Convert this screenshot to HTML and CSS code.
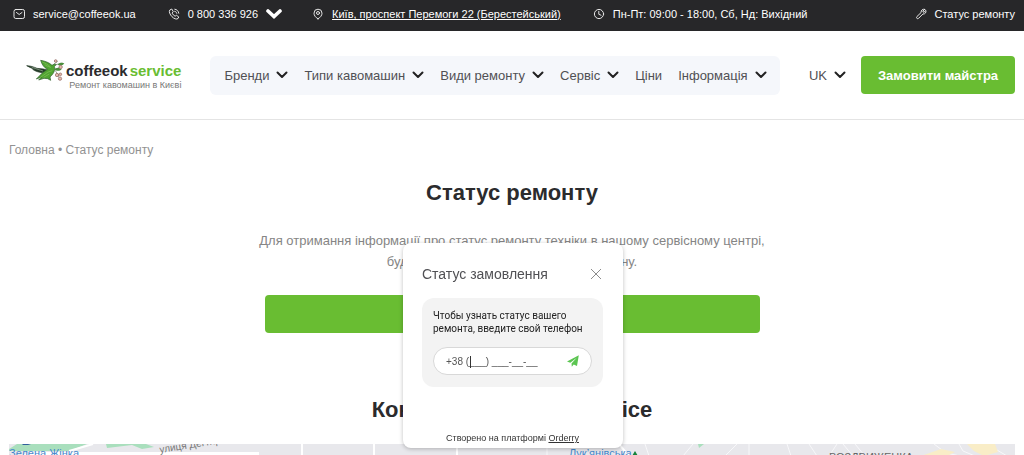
FILE: index.html
```html
<!DOCTYPE html>
<html lang="uk">
<head>
<meta charset="utf-8">
<meta name="viewport" content="width=device-width, initial-scale=1">
<title>Статус ремонту</title>
<link rel="stylesheet" href="styles.css">
</head>
<body>
<svg class="defs" aria-hidden="true">
  <symbol id="chevron" viewBox="0 0 12 8"><path d="M1.5 1.5 6 6l4.500-4.500" fill="none" stroke="currentColor" stroke-width="2" stroke-linecap="round" stroke-linejoin="round"/></symbol>
</svg>

<div class="topbar">
  <a class="top-item mail" href="mailto:service@coffeeok.ua">
    <svg class="top-icon" viewBox="0 0 12 12"><rect x="1" y="1.500" width="10.500" height="9" rx="1.800"/><path d="M3.500 4.500 6.200 6.500 9 4.500"/></svg>
    <span>service@coffeeok.ua</span>
  </a>
  <a class="top-item phone" href="tel:0800336926">
    <svg class="top-icon" viewBox="0 0 12 12"><path d="M3.400 1.200 1.800 2C.6 3.500 2 6.700 4 8.700s4.600 3 6 1.800l.8-1.500-2.300-1.700-1.400.9C5.800 7.600 4.800 6.500 4.200 5.200L5 3.800ZM6.800 1.200c2 .2 3.700 1.800 4 4M6.700 3.300c1 .1 1.900 1 2.100 2"/></svg>
    <span>0 800 336 926</span>
    <svg class="phone-chevron" viewBox="0 0 16 10"><path d="M2 2l6 5.500L14 2" fill="none" stroke="#fff" stroke-width="3.600" stroke-linecap="round"/></svg>
  </a>
  <a class="top-item address" href="#map">
    <svg class="top-icon" viewBox="0 0 12 12"><path d="M6 10.800C3.500 9.400 2 7.400 2 5.200a4 4 0 0 1 8 0c0 2.200-1.500 4.200-4 5.600Z"/><circle cx="6" cy="5" r="1.500"/></svg>
    <span>Київ, проспект Перемоги 22 (Берестейський)</span>
  </a>
  <div class="top-item hours">
    <svg class="top-icon" viewBox="0 0 12 12"><circle cx="6" cy="6" r="4.600"/><path d="M5.800 3.300v3l2.200.9"/></svg>
    <span>Пн-Пт: 09:00 - 18:00, Сб, Нд: Вихідний</span>
  </div>
  <a class="top-item status" href="#status">
    <svg class="top-icon" viewBox="0 0 12 12"><path d="M9.700 1.300 7.900 3.100l.2 1 .9.100 1.900-1.800c.5 2-.8 3.900-3 3.600L3.600 10.300c-1.100 1.100-2.900-.4-1.700-1.700L6.100 4.500C5.800 2.300 7.600.7 9.700 1.300Z"/></svg>
    <span>Статус ремонту</span>
  </a>
</div>

<header class="header">
  <a class="logo" href="#">
    <svg class="bird" viewBox="78 174 120 72">
      <path d="M80 197c10 0 22 4 31 8l20 2 13 4-17 7c-12-1-23-5-29-10l10 1c-10-3-20-7-28-12Z" fill="#253c28" stroke="#253c28" stroke-width="2"/>
      <path d="M95 202 129 213" stroke="#c4d4c0" stroke-width="1.500"/>
      <path d="M122 181c12 2 25 6 34 15l7-4 6 2-6 5c4 10-2 23-13 32l2 10-9-5-11-1-16 5 9-9-16 6 18-18 15-11c-10-6-16-13-20-27Z" fill="#4fa331" stroke="#2c5a29" stroke-width="2"/>
      <path d="M127 186c9 4 18 8 25 16-7-2-14-5-18-9M120 233l24-17 13-4M131 232l17-10" stroke="#73b94c" stroke-width="3" fill="none"/>
      <path d="M162 192c5-4 8-4 11-8M168 194l20-5M163 207c8 0 14-4 19-9M164 210c6 8 10 12 13 22" stroke="#6a7562" stroke-width="2" fill="none"/>
      <path d="M173 194c6-7 12-7 20-4-5 7-12 9-20 4ZM163 208c7-6 16-5 22 0-6 6-15 6-22 0Z" fill="#4a8f3b"/>
      <g fill="#e5b9ab" stroke="#8a625d" stroke-width="2"><circle cx="167" cy="183" r="4"/><circle cx="182" cy="201" r="5"/><circle cx="171" cy="225" r="5"/><circle cx="180" cy="236" r="5"/><circle cx="181" cy="223" r="4"/></g>
    </svg>
    <span class="logo-words"><span class="logo-name">coffeeok<b>service</b></span><span class="logo-sub">Ремонт кавомашин в Києві</span></span>
  </a>
  <nav class="nav">
    <a href="#">Бренди <svg class="chevron"><use href="#chevron"/></svg></a>
    <a href="#">Типи кавомашин <svg class="chevron"><use href="#chevron"/></svg></a>
    <a href="#">Види ремонту <svg class="chevron"><use href="#chevron"/></svg></a>
    <a href="#">Сервіс <svg class="chevron"><use href="#chevron"/></svg></a>
    <a href="#">Ціни</a>
    <a href="#">Інформація <svg class="chevron"><use href="#chevron"/></svg></a>
  </nav>
  <button class="lang" type="button">UK <svg class="chevron"><use href="#chevron"/></svg></button>
  <button class="order" type="button">Замовити майстра</button>
</header>

<main class="main">
  <div class="crumbs"><a href="#">Головна</a> • <span>Статус ремонту</span></div>
  <section class="intro" id="status">
    <h1>Статус ремонту</h1>
    <p>Для отримання інформації про статус ремонту техніки в нашому сервісному центрі, будь ласка, введіть свій номер телефону.</p>
    <button class="check" type="button" aria-label="Перевірити статус"></button>
  </section>
  <h2>Контакти Coffeeok service</h2>
  <div class="map" id="map">
    <svg class="map-art" viewBox="0 0 1006 12" preserveAspectRatio="xMinYMin slice">
      <rect width="1006" height="12" fill="#e8e8ec"/>
      <path d="M8 0h70l-18 7H0V5ZM97 0h40l8 3-12 2-10-4-25 3ZM689 0h6l-5 4Z" fill="#a9dfbd"/>
      <path d="M14 0h8l-3 1h-6Z" fill="#315f9b"/>
      <path d="M60 7 84 0M293 0v12M365 0v12M448 0v12M610 0l10 12" fill="none" stroke="#fff" stroke-width="2"/>
      <path d="M538 0v12M636 0l4 12M674 12l10-12M716 12 728 0M740 0v12M778 0l4 12M800 0l8 12M820 12 828 0M834 0l10 12M846 0l10 12M925 0l12 9 14 3M950 0l4 7 12 5M978 0l20 12" fill="none" stroke="#f8f8fa" stroke-width="1"/>
      <path d="M22 8h228v4H8Z" fill="#fff"/>
      <path d="M912 12l20-7 14 3-8 4ZM958 0h28l3 8-14 4-10-5Z" fill="#f9edc7"/>
      <text x="0" y="13" class="map-blue">Зелена Жінка</text>
      <text x="151" y="9" class="map-gray" transform="rotate(-9 151 9)">улиця Дегтярі</text>
      <text x="560" y="13" class="map-blue">Лук’янівська</text>
      <path d="m623 12 3-5 3 5Z" fill="#16833a"/>
      <text x="820" y="17" class="map-area">ВОЗДВИЖЕНКА</text>
    </svg>
  </div>
</main>

<section class="popup" role="dialog" aria-labelledby="popup-title">
  <div class="popup-head">
    <h3 id="popup-title">Статус замовлення</h3>
    <button class="close" type="button" aria-label="Закрити"><svg viewBox="0 0 12 12"><path d="m1 1 10 10M11 1 1 11"/></svg></button>
  </div>
  <form class="card">
    <label for="tel">Чтобы узнать статус вашего ремонта, введите свой телефон</label>
    <div class="field">
      <input id="tel" type="tel" value="+38 (___) ___-__-__">
      <i class="caret"></i>
      <button class="send" type="submit" aria-label="Отправить"><svg viewBox="0 0 12 12"><path d="M11.800.300 10 11 6.700 9.500 4.800 11.700 4.500 8.400 9.700 2.800 3.300 7.800 0 6.500Z"/></svg></button>
    </div>
  </form>
  <p class="credit">Створено на платформі <a href="#">Orderry</a></p>
</section>
</body>
</html>
```

FILE: styles.css
```css
* { box-sizing: border-box; }
body {
  margin: 0;
  height: 100vh;
  overflow: hidden;
  display: flex;
  flex-direction: column;
  background: #fff;
  color: #555;
  font-family: "Liberation Sans", Arial, sans-serif;
  font-size: 13px;
}
a { color: inherit; text-decoration: none; }
button { font: inherit; border: 0; padding: 0; cursor: pointer; }
svg { flex: none; }
.defs { display: none; }

.topbar {
  display: flex;
  align-items: center;
  height: 31px;
  padding: 0 9px 3px 13px;
  background: #272729;
  color: #fff;
  font-size: 11px;
  white-space: nowrap;
}
.top-item { display: flex; align-items: center; gap: 8px; }
.top-icon { width: 12px; height: 12px; fill: none; stroke: #e6e6e6; stroke-width: 1; stroke-linejoin: round; stroke-linecap: round; }
.phone { margin-left: 32px; }
.phone-chevron { width: 16px; height: 10px; }
.address { margin-left: 30px; }
.address span { text-decoration: underline; }
.hours { margin-left: 32px; }
.status { margin-left: auto; }

.header {
  display: flex;
  align-items: center;
  height: 89px;
  padding: 0 9px 0 26px;
  border-bottom: 1px solid #e4e4e4;
  white-space: nowrap;
}
.logo { display: flex; align-items: flex-start; }
.bird { width: 40px; height: 24px; }
.logo-words { display: flex; flex-direction: column; align-items: flex-end; padding-top: 4px; }
.logo-name { display: flex; gap: 2px; font-size: 15px; line-height: 17px; font-weight: bold; color: #2b2b2d; }
.logo-name b { color: #69bd32; }
.logo-sub { font-size: 9px; line-height: 13px; color: #777; }
.nav {
  display: flex;
  align-items: center;
  gap: 16px;
  height: 39px;
  margin-left: 29px;
  padding: 0 13px 0 14px;
  border-radius: 6px;
  background: #f5f7fb;
}
.nav a, .lang { display: flex; align-items: center; gap: 7px; color: #505054; }
.chevron { width: 12px; height: 8px; color: #222; }
.lang { margin-left: auto; background: none; }
.order {
  width: 154px;
  height: 38px;
  margin-left: 15px;
  border-radius: 4px;
  background: #69bd32;
  color: #fff;
  font-weight: bold;
}

.main { flex: 1; min-height: 0; display: flex; flex-direction: column; padding: 22px 9px 0; }
.crumbs { font-size: 12px; line-height: 16px; color: #929292; }
.intro { display: flex; flex-direction: column; align-items: center; text-align: center; }
h1, h2 { margin: 0; font-size: 22px; line-height: 28px; color: #2b2b2d; text-align: center; }
h1 { margin-top: 21px; }
.intro p { width: 512px; max-width: 100%; margin: 23px 0 0; line-height: 21px; color: #858585; }
.check { width: 495px; max-width: 100%; height: 38px; margin-top: 23px; border-radius: 4px; background: #69bd32; }
h2 { margin-top: 63px; }
.map { flex: 1; min-height: 0; margin-top: 20px; overflow: hidden; }
.map-art { display: block; width: 100%; height: 100%; }
.map-blue { font-size: 11px; fill: #4688cc; }
.map-gray { font-size: 10px; fill: #777; }
.map-area { font-size: 11px; fill: #666; }

.popup {
  position: fixed;
  left: 50%;
  bottom: 7px;
  width: 220px;
  margin-left: -109px;
  padding: 19px 20px 2px 19px;
  border-radius: 8px;
  background: #fff;
  box-shadow: 0 1px 4px rgba(0, 0, 0, .25);
}
.popup-head { display: flex; align-items: center; justify-content: space-between; height: 24px; }
h3 { margin: 0; font-size: 14px; font-weight: normal; color: #505054; }
.close { display: flex; background: none; }
.close svg { width: 12px; height: 12px; margin-right: 1px; fill: none; stroke: #8c8c8c; stroke-width: 1; }
.card { margin-top: 12px; padding: 11px 11px 12px; border-radius: 12px; background: #f3f3f3; }
.card label { display: block; font-family: Roboto, sans-serif; font-size: 10px; line-height: 13px; color: #222; }
.field { position: relative; display: flex; align-items: center; height: 28px; margin-top: 12px; padding: 0 12px; border: 1px solid #d8d8d8; border-radius: 14px; background: #fff; }
.field input { flex: 1; min-width: 0; border: 0; padding: 0; background: none; font: inherit; font-size: 10px; color: #555; outline: 0; }
.caret { position: absolute; left: 36px; top: 8px; width: 1px; height: 12px; background: #333; }
.send { display: flex; background: none; }
.send svg { width: 12px; height: 12px; fill: #5bc551; }
.credit { margin: 44px 0 0; text-align: center; font-size: 9px; line-height: 15px; color: #333; }
.credit a { text-decoration: underline; }
```
